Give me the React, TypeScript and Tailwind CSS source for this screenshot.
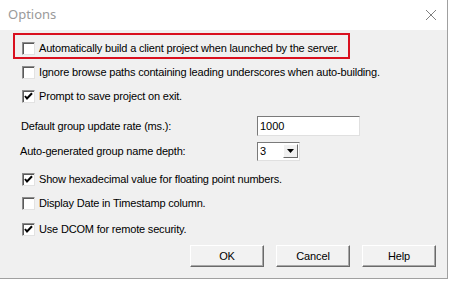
import React from "react";

const font = { fontFamily: '"Liberation Sans", Arial, sans-serif' };

function Check({ checked }: { checked?: boolean }) {
  return (
    <div className="w-[13px] h-[13px] shrink-0 bg-white border border-t-[#8c8c8c] border-l-[#8c8c8c] border-b-[#e2e2e2] border-r-[#e2e2e2] shadow-[inset_1px_1px_0_#5a5a5a] flex items-center justify-center">
      {checked && (
        <svg width="9" height="9" viewBox="0 0 9 9">
          <polyline points="1,4 3,6.5 8,1.2" fill="none" stroke="#000" strokeWidth="2" />
        </svg>
      )}
    </div>
  );
}

function Label({ children }: { children: React.ReactNode }) {
  return (
    <span className="ml-[4px] text-[11px] text-black leading-none whitespace-nowrap tracking-[-0.18px]">
      {children}
    </span>
  );
}

function Row({ checked, label, className = "" }: { checked?: boolean; label: string; className?: string }) {
  return (
    <div className={`flex items-center h-[24px] pl-[22px] ${className}`}>
      <Check checked={checked} />
      <Label>{label}</Label>
    </div>
  );
}

function Btn({ label }: { label: string }) {
  return (
    <div className="w-[74px] h-[22px] bg-[#f2f2f2] border border-t-white border-l-white border-b-[#6a6a6a] border-r-[#6a6a6a] shadow-[inset_-1px_-1px_0_#a8a8a8] flex items-center justify-center text-[11px] text-black tracking-[-0.1px]">
      {label}
    </div>
  );
}

export default function App() {
  return (
    <div className="w-[452px] h-[282px] bg-white overflow-hidden" style={font}>
      <div className="w-[448px] h-[279px] border-r border-b border-[#a0a0a0] bg-[#f0f0f0] flex flex-col">
        {/* Title bar */}
        <div className="h-[30px] bg-white flex items-center justify-between pl-[8px] pr-[8px] shrink-0">
          <span className="text-[13px] text-[#9a9a9a]" style={{ fontFamily: '"Noto Sans", "Open Sans", sans-serif' }}>
            Options
          </span>
          <svg width="12" height="12" viewBox="0 0 12 12" className="mr-[2px]">
            <line x1="1" y1="1" x2="11" y2="11" stroke="#808080" strokeWidth="1" />
            <line x1="11" y1="1" x2="1" y2="11" stroke="#808080" strokeWidth="1" />
          </svg>
        </div>
        {/* Body */}
        <div className="flex flex-col">
          <div className="mt-[3px] ml-[13px] w-[337px] h-[26px] border-2 border-[#d9101f] flex items-center pt-[4px]">
            <div className="flex items-center pl-[7px]">
              <Check />
              <Label>Automatically build a client project when launched by the server.</Label>
            </div>
          </div>
          <Row label="Ignore browse paths containing leading underscores when auto-building." className="mt-[1px]" />
          <Row checked label="Prompt to save project on exit." />
          <div className="mt-[6px] h-[24px] flex items-center pl-[21px]">
            <span className="w-[236px] text-[11px] text-black whitespace-nowrap tracking-[-0.18px]">Default group update rate (ms.):</span>
            <div className="w-[103px] h-[20px] bg-white border border-t-[#7a7a7a] border-l-[#7a7a7a] border-b-[#e0e0e0] border-r-[#e0e0e0] flex items-center pl-[2px] text-[11px] text-black">
              1000
            </div>
          </div>
          <div className="mt-[1px] h-[24px] flex items-center pl-[20px]">
            <span className="w-[237px] text-[11px] text-black whitespace-nowrap tracking-[-0.18px]">Auto-generated group name depth:</span>
            <div className="w-[43px] h-[19px] bg-white border border-t-[#7a7a7a] border-l-[#7a7a7a] border-b-[#e0e0e0] border-r-[#e0e0e0] flex items-center justify-between pl-[2px] pr-[1px] text-[11px] text-black">
              <span>3</span>
              <div className="w-[15px] h-[14px] bg-[#f0f0f0] border border-t-white border-l-white border-b-[#6a6a6a] border-r-[#6a6a6a] flex items-center justify-center">
                <svg width="7" height="4" viewBox="0 0 7 4">
                  <polygon points="0,0 7,0 3.5,4" fill="#000" />
                </svg>
              </div>
            </div>
          </div>
          <Row checked label="Show hexadecimal value for floating point numbers." className="mt-[4px]" />
          <Row label="Display Date in Timestamp column." />
          <Row checked label="Use DCOM for remote security." className="mt-[2px]" />
          <div className="mt-[4px] flex justify-end gap-[12px] pr-[11px]">
            <Btn label="OK" />
            <Btn label="Cancel" />
            <Btn label="Help" />
          </div>
        </div>
      </div>
    </div>
  );
}
